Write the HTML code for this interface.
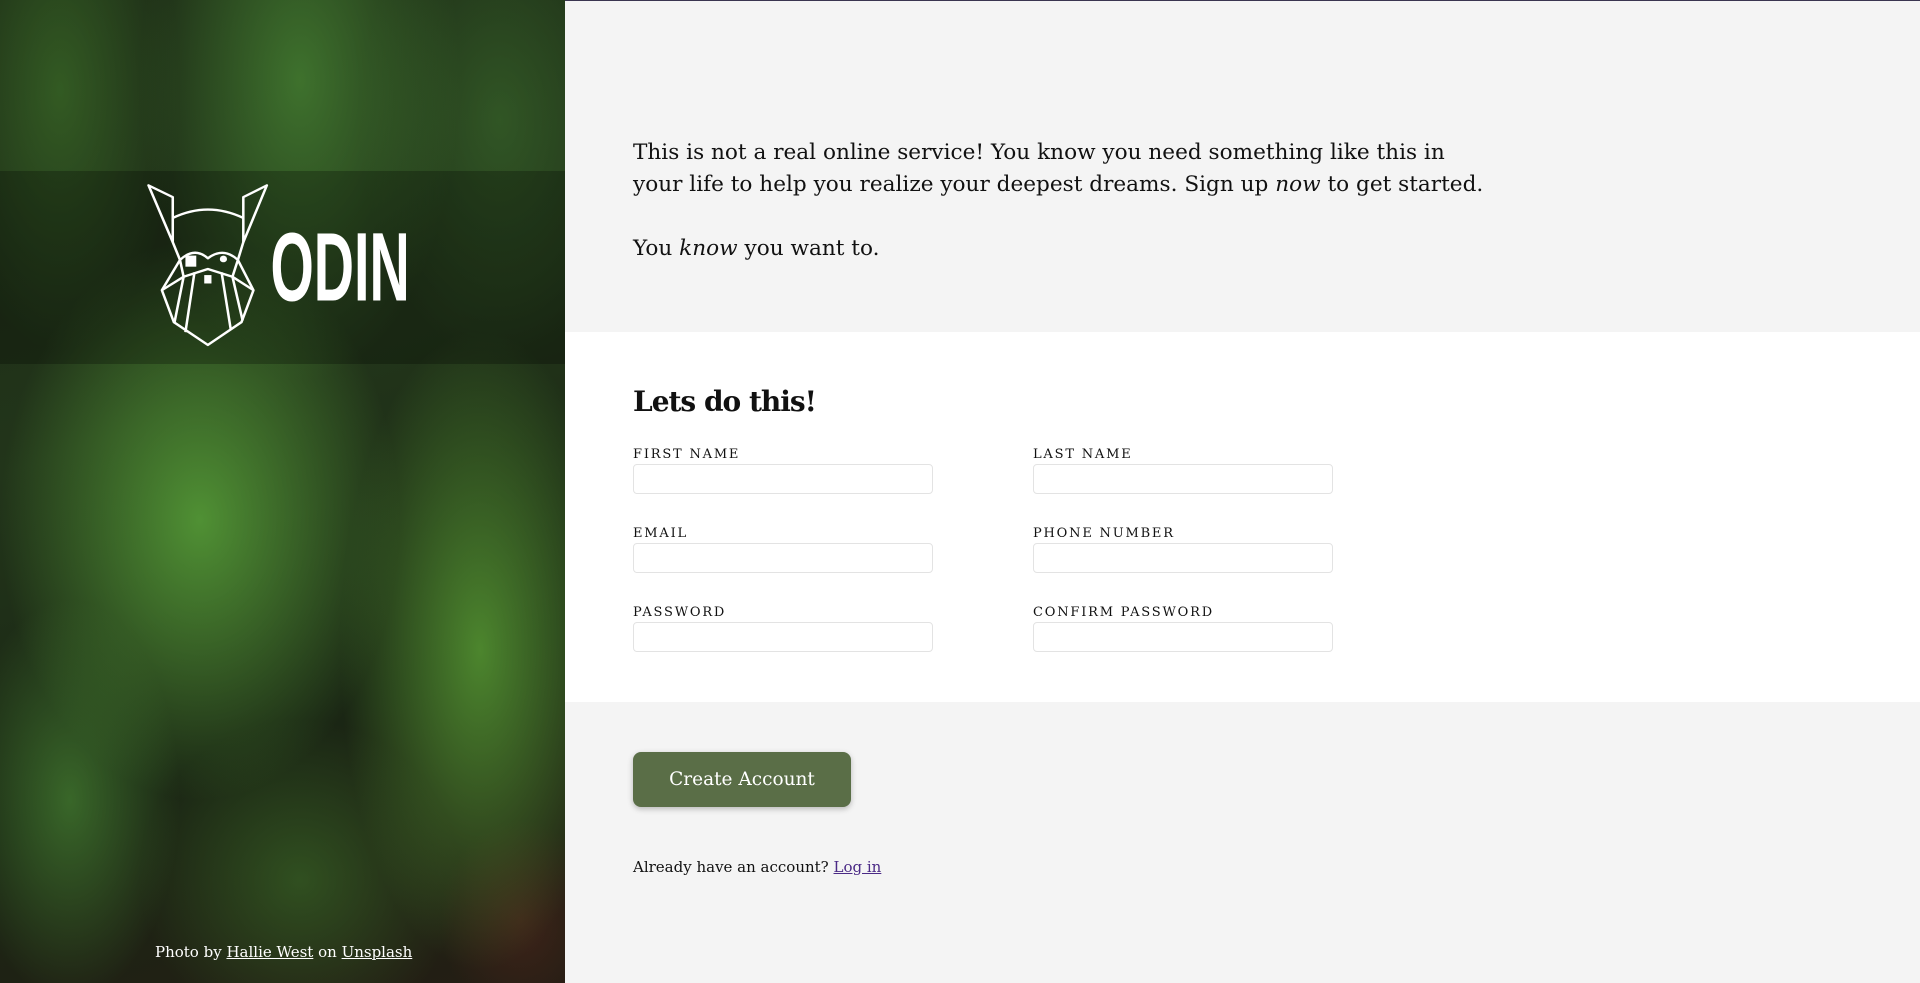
<!DOCTYPE html>
<html><head><meta charset="utf-8">
<style>
*{box-sizing:border-box;margin:0;padding:0}
html,body{width:1920px;height:983px;overflow:hidden;font-family:"DejaVu Serif","Liberation Serif",serif;background:#f4f4f4}
.left{position:absolute;left:0;top:0;width:565px;height:983px;overflow:hidden;
background:
radial-gradient(ellipse 120px 260px at 60px 90px,rgba(60,110,40,.7),transparent),
radial-gradient(ellipse 160px 300px at 300px 80px,rgba(70,130,50,.8),transparent),
radial-gradient(ellipse 140px 240px at 500px 120px,rgba(60,110,45,.6),transparent),
radial-gradient(ellipse 200px 280px at 200px 520px,rgba(85,155,55,.9),transparent),
radial-gradient(ellipse 140px 320px at 480px 650px,rgba(85,150,50,.85),transparent),
radial-gradient(ellipse 110px 200px at 70px 800px,rgba(70,130,50,.7),transparent),
radial-gradient(ellipse 160px 160px at 300px 880px,rgba(60,110,40,.6),transparent),
radial-gradient(ellipse 80px 100px at 520px 920px,rgba(90,40,30,.5),transparent),
linear-gradient(160deg,#1c2a16,#22351a 40%,#1a2614 70%,#241d14);}
.band{position:absolute;left:0;top:171px;width:565px;height:193px;background:rgba(0,0,0,.25)}
.logo{position:absolute;left:142px;top:181px}
.credit{position:absolute;left:155px;top:943px;color:#fff;font-size:15px;white-space:nowrap}
.credit a{color:#fff}
.topline{position:absolute;left:565px;top:0;width:1355px;height:1px;background:#3a3550}
.intro{position:absolute;left:633px;top:137px;font-size:21.6px;line-height:32px;color:#111;width:1000px;white-space:nowrap}
.white{position:absolute;left:565px;top:332px;width:1355px;height:370px;background:#fff}
h1{position:absolute;left:633px;top:385px;font-size:28px;font-weight:bold;color:#111;letter-spacing:-1px}
.f{position:absolute;width:300px}
.f label{display:block;font-size:13px;letter-spacing:1.8px;color:#111;height:19px;line-height:19px}
.f div{height:30px;border:1px solid #e3e3e3;border-radius:4px;background:#fff}
.btn{position:absolute;left:633px;top:752px;width:218px;height:55px;background:#5a6e47;border-radius:8px;color:#fff;font-size:18.5px;text-align:center;line-height:55px;box-shadow:0 2px 6px rgba(0,0,0,.25)}
.already{position:absolute;left:633px;top:858px;font-size:15px;color:#111}
.already a{color:#4b2a86}
</style></head><body>
<div class="left">
 <div class="band"></div>
 <svg class="logo" width="275" height="168" viewBox="400 100 760 500" preserveAspectRatio="none" fill="none" stroke="#fff" stroke-width="7" stroke-linejoin="round">
  <polygon points="418,113 485,148 485,282"/>
  <polygon points="745,113 680,148 680,282"/>
  <path d="M485,210 Q582,160 680,210"/>
  <path d="M485,282 L505,335 L455,425 L488,520 L582,588 L675,520 L708,425 L665,335 L680,282"/>
  <path d="M505,335 Q545,295 582,330 Q625,295 665,335 L650,385 L582,362 L515,385 Z"/>
  <rect x="520" y="322" width="30" height="33" fill="#fff" stroke="none"/>
  <circle cx="625" cy="332" r="10" fill="#fff" stroke="none"/>
  <rect x="572" y="380" width="20" height="25" fill="#fff" stroke="none"/>
  <path d="M515,385 L490,520 M545,372 L520,550 M620,372 L645,540 M650,385 L678,515 M455,425 L515,385 M708,425 L650,385"/>
  <text x="755" y="455" font-family="Liberation Sans Narrow,Liberation Sans,sans-serif" font-weight="bold" font-size="290" fill="#fff" stroke="none" textLength="385" lengthAdjust="spacingAndGlyphs">ODIN</text>
 </svg>
 <div class="credit">Photo by <a href="#">Hallie West</a> on <a href="#">Unsplash</a></div>
</div>
<div class="topline"></div>
<div class="intro">This is not a real online service! You know you need something like this in<br>your life to help you realize your deepest dreams. Sign up <i>now</i> to get started.<br><br>You <i>know</i> you want to.</div>
<div class="white"></div>
<h1>Lets do this!</h1>
<div class="f" style="left:633px;top:445px"><label>FIRST NAME</label><div></div></div>
<div class="f" style="left:1033px;top:445px"><label>LAST NAME</label><div></div></div>
<div class="f" style="left:633px;top:524px"><label>EMAIL</label><div></div></div>
<div class="f" style="left:1033px;top:524px"><label>PHONE NUMBER</label><div></div></div>
<div class="f" style="left:633px;top:603px"><label>PASSWORD</label><div></div></div>
<div class="f" style="left:1033px;top:603px"><label>CONFIRM PASSWORD</label><div></div></div>
<div class="btn">Create Account</div>
<div class="already">Already have an account? <a href="#">Log in</a></div>
</body></html>
